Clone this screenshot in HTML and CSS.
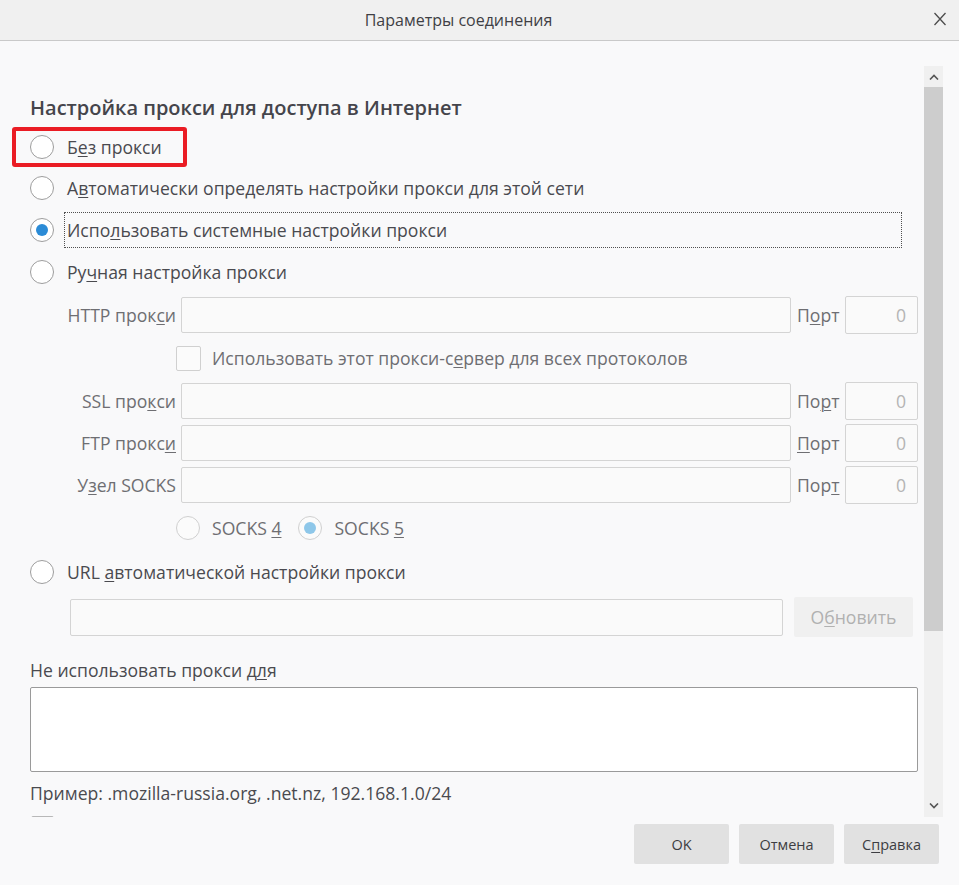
FILE: index.html
```html
<!DOCTYPE html>
<html lang="ru">
<head>
<meta charset="utf-8">
<title>Параметры соединения</title>
<link rel="stylesheet" href="styles.css">
</head>
<body>
<div class="window">
  <header class="titlebar">
    <span class="title">Параметры соединения</span>
    <span class="close"><svg width="14" height="14" viewBox="0 0 14 14"><path d="M1.5 1 L12.5 13 M12.5 1 L1.5 13" stroke="#4c4c4c" stroke-width="1.3" fill="none"/></svg></span>
  </header>
  <div class="main">
    <div class="content">
      <h1 class="heading">Настройка прокси для доступа в Интернет</h1>
      <div class="choices">
        <div class="row highlight"><span class="radio"></span><span class="label">Б<u>е</u>з прокси</span></div>
        <div class="row"><span class="radio"></span><span class="label">А<u>в</u>томатически определять настройки прокси для этой сети</span></div>
        <div class="row"><span class="radio checked"></span><span class="label focus">Испо<u>л</u>ьзовать системные настройки прокси</span></div>
        <div class="row"><span class="radio"></span><span class="label">Ру<u>ч</u>ная настройка прокси</span></div>
      </div>
      <div class="manual">
        <span class="flabel">HTTP прок<u>с</u>и</span>
        <span class="field"></span>
        <span class="plabel">П<u>о</u>рт</span>
        <span class="port">0</span>

        <div class="checkrow"><span class="checkbox"></span><span class="dim">Использовать этот прокси-с<u>е</u>рвер для всех протоколов</span></div>

        <span class="flabel">SSL про<u>к</u>си</span>
        <span class="field"></span>
        <span class="plabel">По<u>р</u>т</span>
        <span class="port">0</span>

        <span class="flabel">FTP прокс<u>и</u></span>
        <span class="field"></span>
        <span class="plabel"><u>П</u>орт</span>
        <span class="port">0</span>

        <span class="flabel">У<u>з</u>ел SOCKS</span>
        <span class="field"></span>
        <span class="plabel">Пор<u>т</u></span>
        <span class="port">0</span>

        <div class="socksrow">
          <span class="radio disabled"></span><span class="dim">SOCKS <u>4</u></span>
          <span class="radio disabled checked-light"></span><span class="dim">SOCKS <u>5</u></span>
        </div>
      </div>
      <div class="row urlrow"><span class="radio"></span><span class="label">URL <u>а</u>втоматической настройки прокси</span></div>
      <div class="urlinput">
        <span class="field url"></span>
        <span class="refresh">О<u>б</u>новить</span>
      </div>
      <div class="noproxy">Не использовать прокси <u>дл</u>я</div>
      <div class="textarea"></div>
      <div class="example">Пример: .mozilla-russia.org, .net.nz, 192.168.1.0/24</div>
      <div class="clipped"><span class="checkbox small"></span></div>
    </div>
    <div class="scrollbar">
      <div class="sb-up"><svg width="10" height="6" viewBox="0 0 10 6"><path d="M1 5.5 L5 1.5 L9 5.5" stroke="#555" stroke-width="1.6" fill="none"/></svg></div>
      <div class="sb-thumb"></div>
      <div class="sb-track"><svg width="10" height="6" viewBox="0 0 10 6"><path d="M1 0.5 L5 4.5 L9 0.5" stroke="#555" stroke-width="1.6" fill="none"/></svg></div>
    </div>
  </div>
  <footer class="footer">
    <span class="btn">OK</span>
    <span class="btn">Отмена</span>
    <span class="btn">С<u>п</u>равка</span>
  </footer>
</div>
</body>
</html>
```
FILE: styles.css
```css
* { box-sizing: border-box; }
html, body { margin: 0; padding: 0; }
body {
  width: 959px;
  height: 885px;
  overflow: hidden;
  background: #f9f9fa;
  font-family: "Open Sans", "Noto Sans", sans-serif;
  color: #4a4a4f;
}
u { text-decoration: underline; text-underline-offset: 2px; text-decoration-thickness: 1px; }

.window { display: flex; flex-direction: column; height: 885px; }

.titlebar {
  height: 41px;
  flex: none;
  background: #f0f0f0;
  border-bottom: 1px solid #c9c9c9;
  display: flex;
  align-items: center;
  justify-content: center;
  position: relative;
}
.title { font-size: 16px; color: #3f3f45; padding-right: 42px; }
.close { position: absolute; right: 12px; top: 12px; display: flex; }

.main { display: flex; height: 776px; flex: none; }
.content {
  flex: 1;
  padding: 55px 6px 0 30px;
  overflow: hidden;
  font-size: 17.6px;
}
.heading {
  margin: 0 0 5px;
  font-size: 20px;
  font-weight: 600;
  line-height: 24px;
  color: #45454b;
}

.choices { display: flex; flex-direction: column; }
.row { display: flex; align-items: center; height: 42px; gap: 13px; }
.row.highlight {
  height: 40px;
  margin: 2px 0 0 -18px;
  padding: 0 21px 0 14px;
  border: 4px solid #ea1c24;
  border-radius: 3px;
  align-self: flex-start;
}
.label { line-height: 24px; }
.label.focus {
  flex: 1;
  margin-left: -2px;
  margin-right: 17px;
  padding: 5px 0 5px 2px;
  outline: 1px dotted #505050;
}

.radio {
  width: 24px; height: 24px;
  border-radius: 50%;
  border: 1px solid #9d9d9d;
  background: #fff;
  flex: none;
  display: flex; align-items: center; justify-content: center;
}
.radio.checked::after {
  content: "";
  width: 12px; height: 12px; border-radius: 50%;
  background: #2b8bd6;
}
.radio.disabled { border-color: #d0d0d0; background: #fbfbfb; }
.radio.checked-light::after {
  content: "";
  width: 12px; height: 12px; border-radius: 50%;
  background: #8ec7e9;
}

.manual {
  display: grid;
  grid-template-columns: 151px 616px 48px 73px;
  grid-template-rows: 36px 38px 36px 36px 36px 38px;
  row-gap: 6px;
  margin-top: 4px;
  align-items: center;
}
.flabel { text-align: right; padding-right: 5px; color: #6e6e72; line-height: 24px; }
.field {
  height: 36px;
  width: 610px;
  border: 1px solid #d4d4d4;
  border-radius: 2px;
  background: #fafafa;
}
.plabel { color: #6e6e72; line-height: 24px; }
.port {
  height: 38px;
  border: 1px solid #d4d4d4;
  border-radius: 2px;
  background: #fafafa;
  color: #b4b4b4;
  text-align: right;
  padding-right: 11px;
  line-height: 36px;
}
.checkrow, .socksrow {
  grid-column: 1 / -1;
  height: 38px;
  display: flex;
  align-items: center;
  padding-left: 146px;
}
.checkrow { gap: 11px; }
.socksrow { gap: 12px; }
.socksrow .dim + .radio { margin-left: 5px; }
.dim { color: #6e6e72; line-height: 24px; }
.checkbox {
  width: 25px; height: 25px;
  border: 1px solid #d0d0d0;
  border-radius: 2px;
  background: #fbfbfb;
  flex: none;
}

.urlrow { margin-top: 4px; }
.urlinput {
  display: flex;
  align-items: center;
  height: 40px;
  margin-top: 4px;
  padding-left: 40px;
  gap: 11px;
}
.field.url { width: 713px; height: 37px; }
.refresh {
  width: 119px; height: 40px;
  background: #f0f0f0;
  border-radius: 2px;
  color: #b1b1b1;
  display: flex; align-items: center; justify-content: center;
}
.noproxy { margin-top: 21px; line-height: 24px; }
.textarea {
  margin-top: 5px;
  height: 85px;
  background: #fff;
  border: 1px solid #9a9a9a;
  border-radius: 2px;
}
.example { margin-top: 9px; line-height: 24px; }
.clipped { margin-top: 11px; padding-left: 1px; }
.checkbox.small { display: block; width: 23px; border-color: #b8b8b8; }

.scrollbar {
  width: 19px;
  margin: 25px 16px 0 0;
  display: flex;
  flex-direction: column;
  flex: none;
}
.sb-up {
  height: 21px;
  background: #f0f0f0;
  display: flex; align-items: center; justify-content: center;
}
.sb-thumb { height: 544px; background: #cdcdcd; }
.sb-track {
  flex: 1;
  background: #f0f0f0;
  display: flex; align-items: flex-end; justify-content: center;
  padding-bottom: 8px;
}

.footer {
  flex: 1;
  display: flex;
  justify-content: flex-end;
  align-items: flex-start;
  gap: 10px;
  padding: 7px 20px 0 0;
}
.btn {
  height: 40px;
  width: 95px;
  background: #e1e1e1;
  border-radius: 2px;
  display: flex; align-items: center; justify-content: center;
  font-size: 14.5px;
  color: #3d3d42;
}
```
